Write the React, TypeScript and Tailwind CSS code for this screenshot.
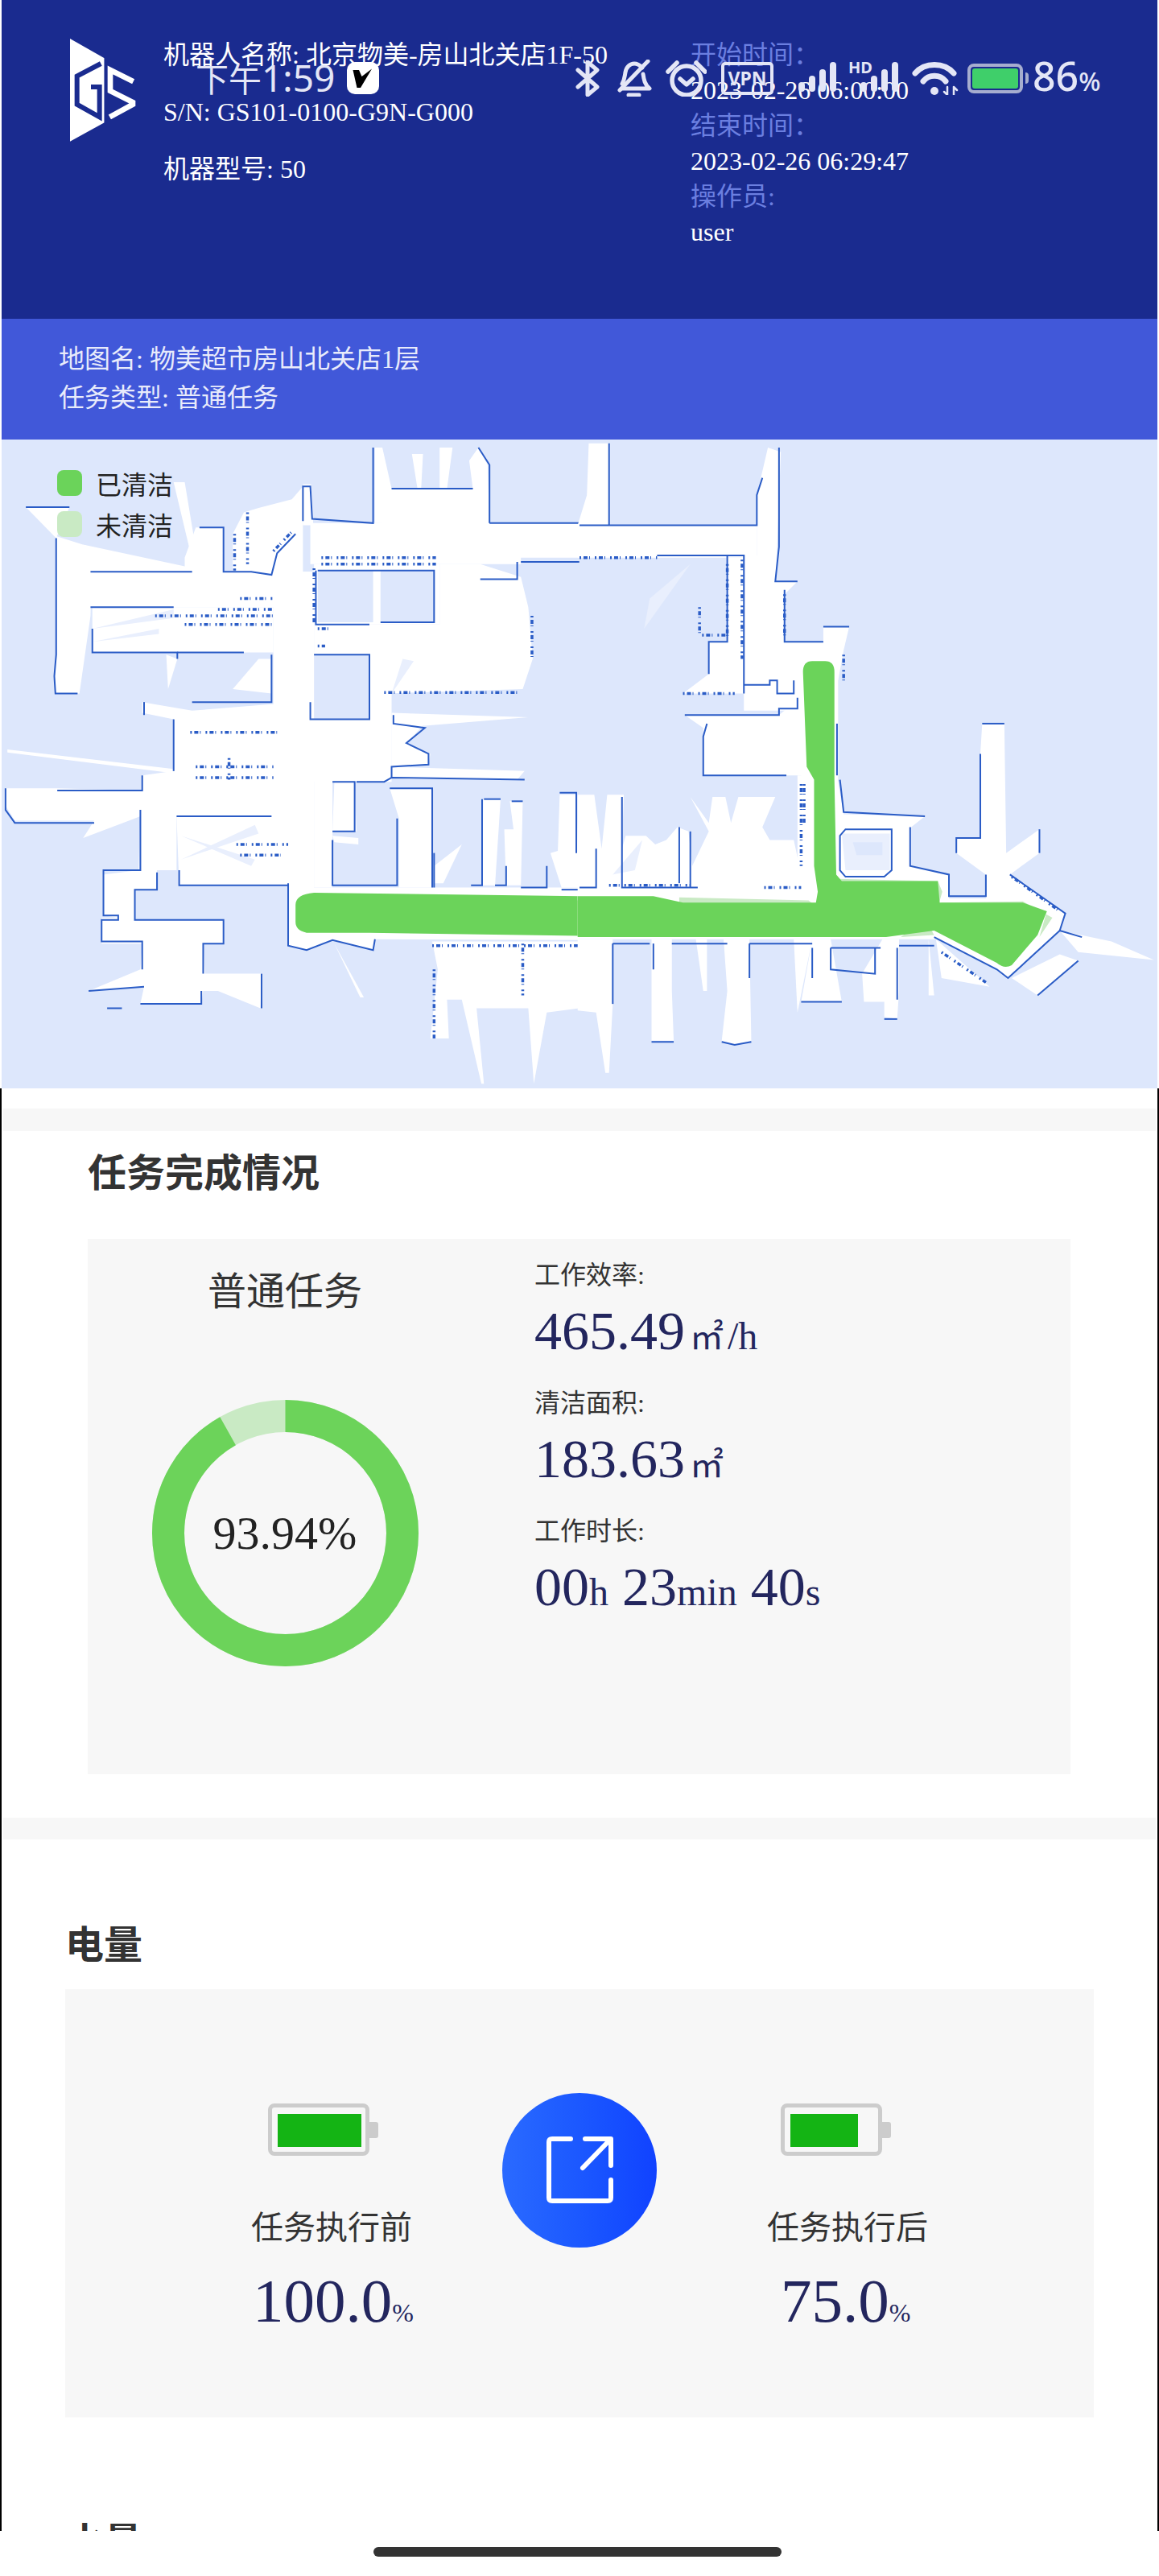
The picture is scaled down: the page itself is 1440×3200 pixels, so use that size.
import type { ReactNode } from "react";

const serif = "font-['Liberation_Serif','Noto_Sans_CJK_SC',serif]";
const statusColor = "#e4e6f6";

// map outlines, traced in crop coordinates (left half / right half)
const whiteLeft = [
  "M70 168H188L152 240Z",
  "M152 235L250 262 245 420 215 600H150L145 560 155 510Z",
  "M245 318H850V400H245Z",
  "M225 255L500 305 520 320H245Z",
  "M470 110H500L530 265 520 290Z",
  "M500 285L530 215H605V320H500Z",
  "M630 230L660 180 700 170 790 150 820 120V320H630Z",
  "M820 115H842L848 210H820Z",
  "M840 205H1568V285H1410V300H840Z",
  "M1015 205V30H1035L1060 125H1130L1115 45H1145L1140 125H1190V30H1225L1210 125H1280L1270 60 1295 30 1320 70 1325 210Z",
  "M740 318H850V1060H780V640H740Z",
  "M250 400H740V505H250Z",
  "M630 590L700 520H735V600Z",
  "M450 510L480 520 455 590Z",
  "M385 620L520 640 735 625H840V810H470V660L385 645Z",
  "M20 730L470 775V785L20 737Z",
  "M15 820H155L385 825V790L470 780H840V885H380L225 935 255 895H40L15 860Z",
  "M380 870H478V1010H425V1055H365V1125H605V1180H550L555 1250H708L705 1330 590 1290H550L545 1320H380L390 1280 240 1290 380 1240 385 1180H275V1120H320L280 1115V1020L375 1010Z",
  "M478 885H780V1045H485Z",
  "M850 300H1190V440H850Z",
  "M850 440H1010V510H850Z",
  "M1000 440H1190V300H1300L1410 330 1430 400 1442 520 1415 590 1040 600 1000 510Z",
  "M1000 510H1060V800H1000Z",
  "M838 660H1060V805H838Z",
  "M1060 645L1430 655 1150 675 1060 670Z",
  "M1060 670H1150L1100 715 1165 740 1160 765 1060 770Z",
  "M1060 770L1420 780 1400 800 1060 798Z",
  "M850 800H900V1050H850Z",
  "M905 805H960L965 920H900Z",
  "M900 930L970 935V950L905 945Z",
  "M1055 820H1170V1050H1080V890Z",
  "M1308 845H1355L1340 1045H1305Z",
  "M1380 850H1415L1410 1045H1370L1365 915H1390Z",
  "M1515 835H1560L1568 1050H1520L1490 970 1510 965Z",
  "M1175 1000L1250 950 1200 1040H1175Z",
  "M780 1050H1568V1172L1015 1170 1010 1195 900 1172 830 1195 780 1185Z",
  "M1170 1175H1568V1330L1480 1340 1445 1505 1430 1330H1290L1310 1505H1303L1250 1310H1210L1215 1400H1165L1185 1240Z",
  "M905 1180L985 1305 975 1305Z",
];

const whiteRight = [
  "M25 20H80V210H-5L20 140Z",
  "M-5 210H480V285H-5Z",
  "M480 140L510 30 545 40 535 260 530 340H590L555 370V480H660V445H730L715 500 700 570H610V640H445V280H480Z",
  "M400 285H445V600H280L350 555V480H400Z",
  "M285 650H540L590 615H615V790H335V680Z",
  "M600 520H700V800H600Z",
  "M590 790H697L715 880 935 885 895 912V1000L1000 1020V1090H590Z",
  "M-5 1060H1000V1170H-5Z",
  "M-5 835H40L60 960 75 835H120L115 960 125 930H180L205 950 235 940 265 910 295 920 305 1000 350 920 300 840 350 900 360 840H395L410 900 430 840H530L495 910 515 940H580L595 1000H640V1080H-5Z",
  "M1000 1075H1100V1020L1020 970V935H1085V740L1090 670H1150L1155 970 1245 915V970L1165 1020 1315 1110 1300 1150 1160 1260 1130 1240 960 1165H900V1075Z",
  "M1300 1150L1440 1175 1555 1218 1350 1200Z",
  "M1170 1260L1300 1205 1350 1220 1240 1300Z",
  "M15 1170H90V1320L80 1480H70L45 1340 -5 1335V1170Z",
  "M195 1170H250V1290L255 1405H195Z",
  "M390 1170H460L465 1405 420 1415 385 1405 400 1290Z",
  "M630 1170H680L710 1315H600Z",
  "M820 1170H865V1290L860 1355 825 1350V1315H770L765 1250Z",
  "M315 1170H345V1290H335Z",
  "M580 1170H630L590 1340Z",
  "M945 1170L960 1300H945Z",
  "M965 1170L1110 1280 980 1260Z",
];

// faint laser rays drawn over the white rooms
const raysLeft = [
  "M490 985L690 905 700 925Z",
  "M490 930L690 985 680 1000Z",
  "M250 450L470 405 470 425Z",
  "M250 480L430 450 430 462Z",
  "M1060 600L1090 520 1120 525Z",
];

const raysRight = [
  "M300 300L175 450 190 380Z",
  "M90 1020L170 940 150 1010Z",
  "M710 925L840 925 840 1010 720 1010Z",
];

const wallsLeft = [
  "M70 168H188",
  "M152 240V510L147 560 150 600H210",
  "M245 318H520",
  "M540 215H605V318H680L735 325 750 275 800 230",
  "M820 200V120H840L845 195 1010 205V30",
  "M1060 125H1280",
  "M1325 205V70L1295 30",
  "M1325 205H1568",
  "M860 315H1175V435H1030",
  "M1000 440H855V315",
  "M850 510H1000V660H840V620",
  "M1410 295H1568",
  "M1300 335H1400V295",
  "M245 400H470",
  "M250 450V505H480V520",
  "M480 505H660",
  "M735 510V620H520",
  "M390 620V650",
  "M470 660V780",
  "M385 790V825H155",
  "M15 820V870L40 900H255",
  "M380 870V1010H280V1115H320V1125H275V1175H385V1240",
  "M478 885H735",
  "M485 1010V1045H780",
  "M425 1015V1055H365V1125H605V1180H550V1250",
  "M708 1250V1330",
  "M545 1290V1320H380",
  "M240 1290L390 1280",
  "M290 1330H330",
  "M780 1040V1185L830 1195 900 1172 1010 1195 1015 1170",
  "M900 805H960V920H900",
  "M900 940V1045H1075V890",
  "M965 805H1040L1060 795 1420 800",
  "M1060 795V770L1160 765V740L1100 715 1150 680 1065 670V650",
  "M1055 820H1170V1050",
  "M1175 1050V970",
  "M1305 845V1045H1275",
  "M1340 1045H1370V1000",
  "M1410 1050H1480V1000",
  "M1385 850H1415",
  "M1310 845H1355",
  "M1515 830H1560V970",
  "M1520 1055H1568",
];

const noiseLeft = [
  "M635 230V315",
  "M870 285H1180",
  "M870 300H1180",
  "M850 310V435",
  "M1040 598H1410",
  "M1440 420V520",
  "M420 420H740",
  "M500 440H740",
  "M590 405H740",
  "M650 380H740",
  "M515 690H750",
  "M530 770H740",
  "M530 795H740",
  "M620 750V800",
  "M640 950H780",
  "M650 975H760",
  "M1170 1185H1568",
  "M1175 1240V1400",
  "M1415 1180V1300",
  "M860 450H900",
  "M860 490H880",
  "M740 270L790 225",
  "M670 180V300",
];

const wallsRight = [
  "M0 210H480V140L495 100",
  "M80 210V20",
  "M210 280H445V600",
  "M400 280V480H350V555",
  "M445 580H515V570H535V600H580V570",
  "M590 610V635H540V650H285",
  "M345 670L335 700V790H560",
  "M540 30V260L530 340H590",
  "M555 360V480H660",
  "M660 445H730",
  "M697 670V790",
  "M705 800L715 875 935 885",
  "M0 1050H45V960",
  "M115 840V1050H320",
  "M300 1050V920",
  "M270 910V1040",
  "M705 930L720 915H845V1010L825 1025H720L705 1010Z",
  "M895 910V1000L1000 1020V1070H1100V1020",
  "M1020 970V935H1085V740",
  "M1090 670H1150",
  "M1245 915V970",
  "M1165 1020L1315 1110 1300 1150 1360 1165",
  "M1300 1150L1160 1260 1130 1240 960 1165",
  "M1240 1300L1350 1220",
  "M90 1180H190",
  "M250 1180H400",
  "M460 1180H630",
  "M680 1190H815",
  "M865 1185H960",
  "M90 1180V1320",
  "M200 1180V1240",
  "M460 1180V1260",
  "M195 1408H255",
  "M385 1408L420 1415 465 1408",
  "M600 1315H710",
  "M825 1355H860",
  "M860 1190V1310",
  "M630 1190V1260",
  "M680 1190V1240L800 1250V1190",
];

const noiseRight = [
  "M0 285H210",
  "M280 600H420",
  "M600 810V1000",
  "M608 810V900",
  "M500 1050H600",
  "M715 510V570",
  "M555 370V470",
  "M325 400V465H395",
  "M80 1045H300",
  "M980 1200L1100 1270",
  "M1170 1025L1300 1105",
  "M400 300V470",
  "M440 290V520",
];

const greenLeft = "M800 1090Q800 1066 850 1062L1568 1070V1162L1000 1155 830 1155Q800 1150 800 1130Z";
const greenRight =
  "M-5 1070H200L280 1085H640L645 1060 635 1000V800L615 770 605 550Q605 525 630 525H665Q690 525 690 550V800L695 1020 710 1035H970L975 1085H1200L1265 1105 1240 1160 1170 1230Q1150 1240 1130 1225L960 1150 830 1165H-5Z";
const paleRight = [
  "M60 1165L100 1135 140 1150H200L260 1165Z",
  "M870 1165L900 1145H950L960 1160Z",
  "M270 1073L620 1080 635 1090H270Z",
  "M700 1030L970 1035 982 1060 972 1090 960 1040H705Z",
  "M975 1085L1200 1082 1280 1120 1245 1165 1265 1105 1200 1092H1000Z",
];

function Walls({ items, width, dash }: { items: string[]; width: number; dash?: string }) {
  return (
    <g fill="none" stroke="#2a5cc6" strokeWidth={width} strokeDasharray={dash}>
      {items.map(function (d) {
        return <path key={d} d={d} vectorEffect="non-scaling-stroke" />;
      })}
    </g>
  );
}

function Rays({ items }: { items: string[] }) {
  return (
    <g fill="#e9effd">
      {items.map(function (d) {
        return <path key={d} d={d} />;
      })}
    </g>
  );
}

function CleaningMap() {
  return (
    <svg width="1436" height="806" viewBox="2 546 1436 806" className="block">
      <rect x="0" y="546" width="1440" height="806" fill="#dde7fc" />
      <g transform="translate(0 540) scale(0.459 0.5357)">
        {whiteLeft.map(function (d) {
          return <path key={d} d={d} fill="#fff" />;
        })}
        <rect x="860" y="315" width="150" height="120" fill="#dde7fc" />
        <rect x="1030" y="315" width="145" height="120" fill="#dde7fc" />
        <Rays items={raysLeft} />
        <Walls items={wallsLeft} width={2} />
        <Walls items={noiseLeft} width={3.5} dash="2 3 5 2 1 6" />
        <path d={greenLeft} fill="#6bd35a" />
      </g>
      <g transform="translate(720 540) scale(0.459 0.5357)">
        {whiteRight.map(function (d) {
          return <path key={d} d={d} fill="#fff" />;
        })}
        <Rays items={raysRight} />
        <path d="M740 945H820V975H750Z" fill="#dde7fc" />
        <Walls items={wallsRight} width={2} />
        <Walls items={noiseRight} width={3.5} dash="2 3 5 2 1 6" />
        {paleRight.map(function (d) {
          return <path key={d} d={d} fill="#c9eac4" />;
        })}
        <path d={greenRight} fill="#6bd35a" />
      </g>
    </svg>
  );
}

function Logo() {
  return (
    <svg width="82" height="128" viewBox="82 55 246 384" className="mt-[48px] mr-[34px] shrink-0">
      <path d="M82 55L210 128V368L82 438Z" fill="#fff" />
      <path d="M197 148L108 195V300L192 347V235H160" fill="none" stroke="#1a2b8f" strokeWidth="18" />
      <path d="M210 120H228V370H210Z" fill="#1a2b8f" />
      <path d="M318 215L232 172V250L316 292V300L230 347" fill="none" stroke="#fff" strokeWidth="20" />
    </svg>
  );
}

function SignalBars({ className }: { className?: string }) {
  return (
    <svg width="47" height="37" viewBox="0 0 47 37" fill={statusColor} className={className}>
      <rect x="0" y="25" width="8" height="12" rx="4" />
      <rect x="13" y="17" width="8" height="20" rx="4" />
      <rect x="26" y="9" width="8" height="28" rx="4" />
      <rect x="39" y="0" width="8" height="37" rx="4" />
    </svg>
  );
}

function StatusBar() {
  return (
    <div className="absolute top-[73px] left-[243px] flex items-center h-[48px] text-[#e4e6f6] font-['Noto_Sans','Noto_Sans_CJK_SC',sans-serif]">
      <span className="w-[188px] text-[46px] leading-[48px] whitespace-nowrap">
        <span className="text-[41px]">下午</span>1:59
      </span>
      <div className="w-[40px] h-[40px] rounded-[10px] bg-white shrink-0">
        <svg width="40" height="40" viewBox="0 0 40 40">
          <path d="M7.5 10H15L18.5 18 31 8.6 17 32H12.5Z" fill="#000" />
        </svg>
      </div>

      <svg width="30" height="45" viewBox="0 0 30 45" fill="none" stroke={statusColor} strokeWidth="5" strokeLinejoin="round" strokeLinecap="round" className="ml-[244px] shrink-0">
        <path d="M3 12L27 33 15 43V2L27 12 3 33" />
      </svg>
      <svg width="45" height="46" viewBox="0 0 45 46" fill="none" stroke={statusColor} strokeWidth="5" strokeLinecap="round" strokeLinejoin="round" className="ml-[20px] shrink-0">
        <path d="M8 30C11 25 11 21 12 16 13 9 18 5 23 5 27 5 30 7 33 10" />
        <path d="M34 18C35 25 36 31 42 36H8" />
        <path d="M40 2L5 38" />
        <path d="M16 44H29" />
      </svg>
      <svg width="51" height="45" viewBox="0 0 51 45" fill="none" stroke={statusColor} strokeWidth="5.5" strokeLinecap="round" strokeLinejoin="round" className="ml-[17px] shrink-0">
        <circle cx="26" cy="25" r="18" />
        <path d="M3 14L14 3" />
        <path d="M38 3L49 14" />
        <path d="M18 23L26 30 34 23" />
      </svg>
      <div className="ml-[18px] w-[65px] h-[41px] border-[4px] border-[#e4e6f6] rounded-[5px] flex items-center justify-center text-[23px] leading-none font-bold shrink-0">
        VPN
      </div>
      <SignalBars className="ml-[31px] mt-[-4px] shrink-0" />
      <div className="relative ml-[15px] w-[62px] h-[37px] mt-[-4px] flex justify-end shrink-0">
        <SignalBars />
        <span className="absolute left-0 top-[-2px] text-[20px] leading-[18px] font-bold">HD</span>
      </div>
      <svg width="58" height="42" viewBox="0 0 58 42" fill="none" stroke={statusColor} strokeWidth="7" strokeLinecap="round" className="ml-[17px] shrink-0">
        <path d="M4 15C16 1 40 1 52 15" />
        <path d="M14 25C21 16 35 16 42 25" />
        <circle cx="28" cy="37" r="5" fill={statusColor} stroke="none" />
        <path d="M44 42V32M40 38L44 42M52 42V32M52 32L56 36" strokeWidth="2.5" />
      </svg>
      <div className="ml-[11px] flex items-center shrink-0">
        <div className="w-[69px] h-[37px] border-[4px] border-[#a6adcf] rounded-[8px] p-[2px]">
          <div className="w-full h-full rounded-[3px] bg-[#3fcf6a]" />
        </div>
        <div className="w-[4px] h-[14px] ml-[3px] rounded-r-full bg-[#a6adcf]" />
      </div>
      <span className="ml-[5px] text-[50px] leading-[48px] font-medium whitespace-nowrap">
        86<span className="text-[32px]">%</span>
      </span>
    </div>
  );
}

function Header() {
  return (
    <div className={`flex h-[396px] pl-[85px] bg-[#1a2b8f] text-[32px] text-white ${serif}`}>
      <Logo />
      <div className="w-[655px] shrink-0 pt-[33px] leading-[71px]">
        <p className="whitespace-nowrap">机器人名称: 北京物美-房山北关店1F-50</p>
        <p>S/N: GS101-0100-G9N-G000</p>
        <p>机器型号: 50</p>
      </div>
      <div className="pt-[46px] leading-[44px]">
        <p className="text-[#6b7fe0]">开始时间：</p>
        <p>2023-02-26 06:00:00</p>
        <p className="text-[#6b7fe0]">结束时间：</p>
        <p>2023-02-26 06:29:47</p>
        <p className="text-[#6b7fe0]">操作员:</p>
        <p>user</p>
      </div>
    </div>
  );
}

function SubHeader() {
  return (
    <div className={`h-[150px] pl-[71px] pt-[26px] bg-[#4158d9] text-[32px] leading-[48px] text-[#e8ebfb] ${serif}`}>
      <p>地图名: 物美超市房山北关店1层</p>
      <p>任务类型: 普通任务</p>
    </div>
  );
}

function Legend() {
  return (
    <div className="absolute left-[69px] top-[38px] flex flex-col gap-[19px] text-[32px] leading-[32px] text-[#222] font-['Noto_Sans_CJK_SC',sans-serif]">
      <div className="flex items-center gap-[17px]">
        <span className="w-[31px] h-[32px] rounded-[8px] bg-[#6bd35a]" />
        已清洁
      </div>
      <div className="flex items-center gap-[17px]">
        <span className="w-[31px] h-[32px] rounded-[8px] bg-[#c9eac4]" />
        未清洁
      </div>
    </div>
  );
}

function Donut() {
  const r = 145.5;
  const c = 2 * Math.PI * r;
  const done = 0.918;
  return (
    <div className="relative w-[331px] h-[331px] mt-[104px]">
      <svg width="331" height="331" viewBox="0 0 331 331" fill="none" strokeWidth="40">
        <circle cx="165.5" cy="165.5" r={r} stroke="#c9eac4" />
        <circle
          cx="165.5"
          cy="165.5"
          r={r}
          stroke="#6cd35a"
          strokeDasharray={`${c * done} ${c}`}
          transform="rotate(-90 165.5 165.5)"
        />
      </svg>
      <div className="absolute inset-0 flex items-center justify-center text-[58px] text-[#222]">93.94%</div>
    </div>
  );
}

function Stat({ label, children }: { label: string; children: ReactNode }) {
  return (
    <div>
      <p className="text-[32px] leading-[44px] text-[#333]">{label}</p>
      <p className="mt-[7px] h-[80px] text-[68px] leading-[80px] text-[#23265e] whitespace-nowrap">{children}</p>
    </div>
  );
}

function Unit({ children }: { children: ReactNode }) {
  return <span className="text-[48px]">{children}</span>;
}

function SquareMeter() {
  return <span className="ml-[6px] text-[42px]">㎡</span>;
}

function TaskSection() {
  return (
    <div className="h-[853px] pt-[23px]">
      <h2 className="ml-[107px] text-[48px] leading-[60px] font-bold text-[#333]">任务完成情况</h2>
      <div className="flex ml-[107px] mt-[51px] w-[1221px] h-[665px] bg-[#f7f7f7]">
        <div className="w-[490px] pt-[36px] flex flex-col items-center shrink-0">
          <p className="text-[48px] leading-[60px] text-[#333]">普通任务</p>
          <Donut />
        </div>
        <div className="ml-[65px] pt-[23px] flex flex-col gap-[28px]">
          <Stat label="工作效率:">
            465.49
            <SquareMeter />
            <span className="ml-[5px] text-[48px]">/h</span>
          </Stat>
          <Stat label="清洁面积:">
            183.63
            <SquareMeter />
          </Stat>
          <Stat label="工作时长:">
            00<Unit>h</Unit> 23<Unit>min</Unit> 40<Unit>s</Unit>
          </Stat>
        </div>
      </div>
    </div>
  );
}

function Battery({ level }: { level: string }) {
  return (
    <div className="flex items-center">
      <div className="w-[126px] h-[65px] border-[5px] border-[#cccccc] rounded-[8px] pl-[7px] pt-[8px]">
        <div className={`h-[41px] bg-[#14b414] ${level}`} />
      </div>
      <div className="w-[11px] h-[20px] bg-[#cccccc] rounded-r-[3px]" />
    </div>
  );
}

function PowerSection() {
  return (
    <div className="pt-[102px]">
      <h2 className="ml-[79px] text-[48px] leading-[60px] font-bold text-[#333]">电量</h2>
      <div className="flex ml-[79px] mt-[24px] w-[1278px] h-[532px] bg-[#f7f7f7]">
        <div className="ml-[231px] w-[312px] pt-[142px] shrink-0">
          <div className="ml-[21px]">
            <Battery level="w-[104px]" />
          </div>
          <p className="mt-[65px] text-[40px] leading-[50px] text-[#333]">任务执行前</p>
          <p className="ml-[2px] mt-[20px] text-[77px] leading-[90px] text-[#23265e]">
            100.0<span className="text-[32px]">%</span>
          </p>
        </div>
        <div className="mt-[129px] w-[192px] h-[192px] rounded-full bg-gradient-to-r from-[#2a6aff] to-[#1142ff] shrink-0">
          <svg width="192" height="192" viewBox="624 2600 192 192" fill="none" stroke="#fff" strokeWidth="6" strokeLinecap="round" strokeLinejoin="round">
            <path d="M709 2657H686C683 2657 682 2658 682 2661V2730C682 2733 683 2734 686 2734H755C758 2734 759 2733 759 2730V2708" />
            <path d="M727 2657H759V2690" />
            <path d="M758 2658L724 2693" />
          </svg>
        </div>
        <div className="ml-[137px] pt-[142px]">
          <div className="ml-[17px]">
            <Battery level="w-[84px]" />
          </div>
          <p className="mt-[65px] text-[40px] leading-[50px] text-[#333]">任务执行后</p>
          <p className="ml-[17px] mt-[20px] text-[77px] leading-[90px] text-[#23265e]">
            75.0<span className="text-[32px]">%</span>
          </p>
        </div>
      </div>
      <h2 className="ml-[79px] mt-[126px] text-[48px] leading-[60px] font-bold text-[#333]">水量</h2>
    </div>
  );
}

export default function App() {
  return (
    <div className={`relative w-[1440px] h-[3200px] overflow-hidden bg-white ${serif}`}>
      <div className="mx-[2px]">
        <Header />
        <SubHeader />
        <div className="relative h-[806px]">
          <CleaningMap />
          <Legend />
        </div>
      </div>
      <StatusBar />

      <div className="h-[1792px] overflow-hidden border-x-2 border-black">
        <div className="h-[25px]" />
        <div className="h-[28px] mx-[2px] bg-[#f7f7f7]" />
        <TaskSection />
        <div className="h-[27px] mx-[2px] bg-[#f7f7f7]" />
        <PowerSection />
      </div>

      <div className="flex justify-center pt-[20px] pr-[5px]">
        <div className="w-[507px] h-[12px] rounded-full bg-[#333]" />
      </div>
    </div>
  );
}
